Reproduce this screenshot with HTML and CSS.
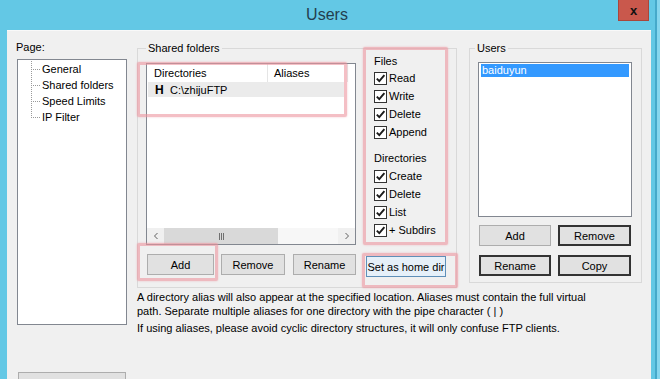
FILE: index.html
```html
<!DOCTYPE html>
<html>
<head>
<meta charset="utf-8">
<title>Users</title>
<link rel="stylesheet" href="styles.css">
</head>
<body>
<div class="window">
  <div class="titlebar">
    <span class="title">Users</span>
    <span class="close">x</span>
  </div>
  <div class="client">
    <div class="col-left">
      <div class="lbl">Page:</div>
      <div class="tree">
        <div class="tree-item">General</div>
        <div class="tree-item">Shared folders</div>
        <div class="tree-item">Speed Limits</div>
        <div class="tree-item last">IP Filter</div>
      </div>
      <div class="okbtn"></div>
    </div>
    <div class="col-main">
      <div class="top-row">
        <div class="group shared">
          <div class="group-head"><span>Shared folders</span></div>
          <div class="group-body">
            <div class="dir-panel">
              <div class="listview">
                <div class="lv-head">
                  <div class="lv-col c1">Directories</div>
                  <div class="lv-col c2">Aliases</div>
                </div>
                <div class="lv-row"><b class="home">H</b>C:\zhijuFTP</div>
                <div class="lv-fill"></div>
                <div class="hscroll">
                  <div class="sb-arrow"><svg viewBox="0 0 8 8"><path d="M5.5 1 2.5 4 5.5 7"/></svg></div>
                  <div class="sb-thumb"><span class="grip"></span></div>
                  <div class="sb-track"></div>
                  <div class="sb-arrow"><svg viewBox="0 0 8 8"><path d="M2.5 1 5.5 4 2.5 7"/></svg></div>
                </div>
              </div>
              <div class="btn-row">
                <div class="btn w-add">Add</div>
                <div class="btn w-remove">Remove</div>
                <div class="btn w-rename">Rename</div>
              </div>
            </div>
            <div class="perm-panel">
              <div class="perm-group">
                <div class="lbl">Files</div>
                <div class="cb-list">
                  <div class="cb-row"><span class="cb"><svg viewBox="0 0 11 11"><path d="M1.8 5.6 4.3 8.2 9.4 2.2"/></svg></span>Read</div>
                  <div class="cb-row"><span class="cb"><svg viewBox="0 0 11 11"><path d="M1.8 5.6 4.3 8.2 9.4 2.2"/></svg></span>Write</div>
                  <div class="cb-row"><span class="cb"><svg viewBox="0 0 11 11"><path d="M1.8 5.6 4.3 8.2 9.4 2.2"/></svg></span>Delete</div>
                  <div class="cb-row"><span class="cb"><svg viewBox="0 0 11 11"><path d="M1.8 5.6 4.3 8.2 9.4 2.2"/></svg></span>Append</div>
                </div>
              </div>
              <div class="perm-group dirs">
                <div class="lbl">Directories</div>
                <div class="cb-list">
                  <div class="cb-row"><span class="cb"><svg viewBox="0 0 11 11"><path d="M1.8 5.6 4.3 8.2 9.4 2.2"/></svg></span>Create</div>
                  <div class="cb-row"><span class="cb"><svg viewBox="0 0 11 11"><path d="M1.8 5.6 4.3 8.2 9.4 2.2"/></svg></span>Delete</div>
                  <div class="cb-row"><span class="cb"><svg viewBox="0 0 11 11"><path d="M1.8 5.6 4.3 8.2 9.4 2.2"/></svg></span>List</div>
                  <div class="cb-row"><span class="cb"><svg viewBox="0 0 11 11"><path d="M1.8 5.6 4.3 8.2 9.4 2.2"/></svg></span>+ Subdirs</div>
                </div>
              </div>
              <div class="btn hot w-home">Set as home dir</div>
            </div>
          </div>
        </div>
        <div class="group users">
          <div class="group-head"><span>Users</span></div>
          <div class="group-body">
            <div class="ulist">
              <div class="uitem">baiduyun</div>
            </div>
            <div class="ubtns">
              <div class="btn">Add</div>
              <div class="btn def">Remove</div>
              <div class="btn def">Rename</div>
              <div class="btn def">Copy</div>
            </div>
          </div>
        </div>
      </div>
      <div class="desc">
        <p>A directory alias will also appear at the specified location. Aliases must contain the full virtual<br>path. Separate multiple aliases for one directory with the pipe character ( | )</p>
        <p>If using aliases, please avoid cyclic directory structures, it will only confuse FTP clients.</p>
      </div>
    </div>
  </div>
  <div class="mark m-list"></div>
  <div class="mark m-files"></div>
  <div class="mark m-add"></div>
  <div class="mark m-home"></div>
</div>
</body>
</html>
```

FILE: styles.css
```css
* { box-sizing: border-box; }
html, body { margin: 0; padding: 0; }
body {
  width: 660px;
  height: 379px;
  overflow: hidden;
  font-family: "Liberation Sans", Arial, sans-serif;
  font-size: 11px;
  color: #000;
}
.window {
  width: 660px;
  height: 379px;
  position: relative;
  overflow: hidden;
  display: flex;
  flex-direction: column;
  background-color: #63c8e5;
  background-image: linear-gradient(to right, transparent 655px, #45a9ca 655px, #45a9ca 657px, #86d6ee 657px);
}
.titlebar {
  height: 30px;
  flex: none;
  display: flex;
  align-items: center;
  justify-content: center;
  position: relative;
}
.title {
  font-size: 16px;
  color: #233f4e;
  margin-left: -6px;
}
.close {
  position: absolute;
  left: 618px;
  top: 0;
  width: 31px;
  height: 21px;
  background: #c9584c;
  border: 1px solid #a9463b;
  border-top: none;
  color: #111;
  font-weight: bold;
  font-size: 13px;
  display: flex;
  align-items: center;
  justify-content: center;
}
.client {
  margin-left: 7px;
  width: 644px;
  flex: 1;
  background: #f0f0f0;
  border-top: 1px solid #f9f9f9;
  display: flex;
  overflow: hidden;
}
.lbl { height: 13px; line-height: 13px; white-space: nowrap; }

/* left column */
.col-left { width: 123px; flex: none; padding: 10px 0 0 9px; }
.tree {
  margin: 5px 0 0 1px;
  width: 110px;
  height: 266px;
  background: #fff;
  border: 1px solid #828790;
  padding: 1px 0 0 13px;
}
.tree-item { height: 16px; display: flex; align-items: center; white-space: nowrap; }
.tree-item::before {
  content: "";
  flex: none;
  width: 10px;
  height: 16px;
  margin-right: 1px;
  background:
    repeating-linear-gradient(to bottom, #9a9a9a 0 1px, transparent 1px 2px) 0 0 / 1px 100% no-repeat,
    repeating-linear-gradient(to right, #9a9a9a 0 1px, transparent 1px 2px) 0 8px / 10px 1px no-repeat;
}
.tree-item.last::before {
  background-size: 1px 9px, 10px 1px;
}
.okbtn {
  margin: 47px 0 0 2px;
  width: 108px;
  height: 24px;
  background: #e1e1e1;
  border: 1px solid #adadad;
}

/* main column */
.col-main { margin-left: 7px; padding-top: 11px; display: flex; flex-direction: column; }
.top-row { display: flex; gap: 12px; align-items: flex-start; }
.group { display: flex; flex-direction: column; flex: none; }
.group-head { display: flex; height: 13px; line-height: 13px; }
.group-head::before {
  content: "";
  width: 8px;
  height: 7px;
  margin-top: 6px;
  border-top: 1px solid #d9d9d9;
  border-left: 1px solid #d9d9d9;
}
.users .group-head::before { width: 5px; }
.group-head::after {
  content: "";
  flex: 1;
  height: 7px;
  margin-top: 6px;
  border-top: 1px solid #d9d9d9;
  border-right: 1px solid #d9d9d9;
}
.group-head span { padding: 0 2px; }
.group-body { border: 1px solid #d9d9d9; border-top: none; }

.shared { width: 320px; }
.shared .group-body { display: flex; height: 233px; padding: 0 0 0 8px; }
.dir-panel { width: 210px; flex: none; margin-top: 8px; }
.listview {
  width: 210px;
  height: 182px;
  background: #fff;
  border: 1px solid #828790;
  display: flex;
  flex-direction: column;
}
.lv-head { display: flex; height: 18px; flex: none; }
.lv-col { line-height: 18px; padding-left: 7px; border-right: 1px solid #e5e5e5; }
.c1 { width: 121px; }
.c2 { width: 80px; padding-left: 6px; }
.lv-row {
  height: 15px;
  width: 196px;
  margin-left: 1px;
  background: #ebebeb;
  display: flex;
  align-items: center;
  padding-left: 7px;
  flex: none;
}
.home { font-weight: bold; font-size: 12px; width: 15px; }
.lv-fill { flex: 1; }
.hscroll { height: 16px; display: flex; background: #f0f0f0; flex: none; }
.sb-arrow { width: 17px; display: flex; align-items: center; justify-content: center; }
.sb-arrow svg { width: 8px; height: 8px; fill: none; stroke: #606060; stroke-width: 1; }
.sb-thumb {
  width: 114px;
  background: #d9d9d9;
  display: flex;
  align-items: center;
  justify-content: center;
}
.grip {
  width: 5px;
  height: 7px;
  background: repeating-linear-gradient(to right, #707070 0 1px, transparent 1px 2px);
}
.sb-track { flex: 1; background: #f7f7f7; }

.btn-row { display: flex; gap: 7px; margin: 9px 0 0 1px; }
.btn {
  height: 21px;
  background: #e1e1e1;
  border: 1px solid #adadad;
  display: flex;
  align-items: center;
  justify-content: center;
  white-space: nowrap;
}
.btn.def { border: 2px solid #333; }
.btn.hot { border-color: #5f8fb8; background: #e6f0f9; }
.w-add { width: 67px; }
.w-remove { width: 64px; }
.w-rename { width: 63px; margin-left: 1px; }
.w-home { width: 80px; margin: 17px 0 0 1px; }

.perm-panel { margin-left: 9px; width: 91px; display: flex; flex-direction: column; }
.perm-group { padding-left: 9px; }
.perm-group.dirs { margin-top: 11px; }
.cb-list { margin-top: 1px; }
.perm-group.dirs .cb-list { margin-top: 2px; }
.cb-row { height: 18px; display: flex; align-items: center; white-space: nowrap; }
.cb {
  width: 13px;
  height: 13px;
  flex: none;
  border: 1px solid #333;
  background: #fff;
  margin-right: 2px;
  display: flex;
  align-items: center;
  justify-content: center;
}
.cb svg { width: 11px; height: 11px; fill: none; stroke: #1a1a1a; stroke-width: 1.9; }

.users { width: 173px; }
.users .group-body { padding: 7px 0 6px 8px; }
.ulist {
  width: 154px;
  height: 155px;
  background: #fff;
  border: 1px solid #828790;
  padding: 1px 2px;
}
.uitem {
  height: 13px;
  line-height: 13px;
  background: #3399ff;
  color: #fff;
  padding-left: 1px;
}
.ubtns {
  display: grid;
  grid-template-columns: 72px 73px;
  column-gap: 7px;
  row-gap: 9px;
  margin: 8px 0 0 1px;
}

.desc { margin-top: 2px; white-space: nowrap; line-height: 14px; }
.desc p { margin: 0; }
.desc p + p { margin-top: 3px; }

/* annotation marks over the screenshot */
.mark {
  position: absolute;
  border: 3px solid rgba(236, 148, 158, 0.6);
  border-radius: 2px;
  box-shadow: 0 0 2px rgba(236, 148, 158, 0.6);
}
.m-list { left: 137px; top: 62px; width: 210px; height: 55px; }
.m-files { left: 363px; top: 47px; width: 85px; height: 198px; }
.m-add { left: 137px; top: 243px; width: 81px; height: 38px; }
.m-home { left: 362px; top: 253px; width: 96px; height: 35px; }
```
